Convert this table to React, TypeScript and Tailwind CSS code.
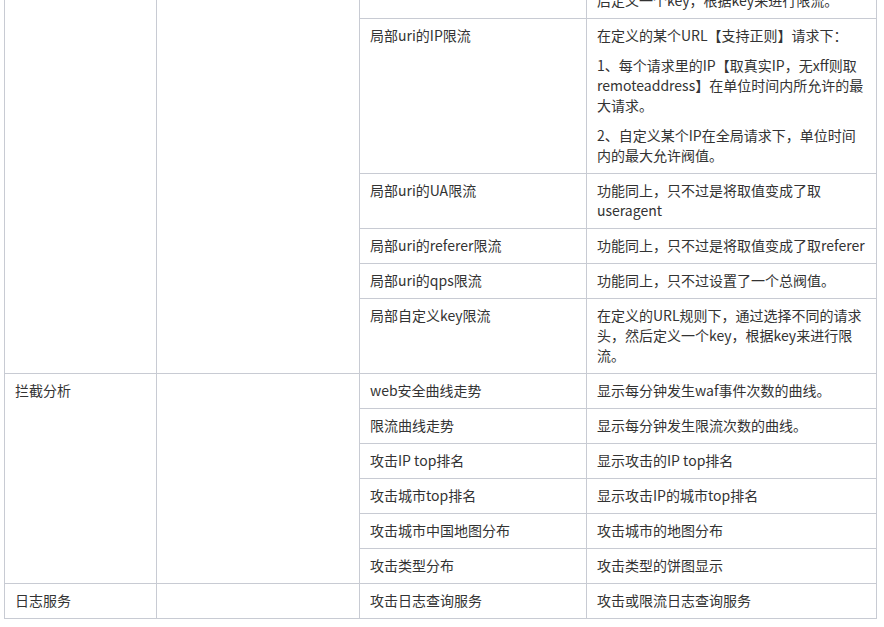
import React from "react";

const cell = "border border-[#c8cbd3] px-[10px] pt-[6px] pb-[8px] align-top";

type Row = { name: string; desc: React.ReactNode };

const limitRows: Row[] = [
  {
    name: "局部uri的IP限流",
    desc: (
      <div className="flex flex-col gap-[10px]">
        <p>在定义的某个URL【支持正则】请求下：</p>
        <p>1、每个请求里的IP【取真实IP，无xff则取remoteaddress】在单位时间内所允许的最大请求。</p>
        <p>2、自定义某个IP在全局请求下，单位时间内的最大允许阀值。</p>
      </div>
    ),
  },
  { name: "局部uri的UA限流", desc: "功能同上，只不过是将取值变成了取useragent" },
  { name: "局部uri的referer限流", desc: <span className="whitespace-nowrap">功能同上，只不过是将取值变成了取referer</span> },
  { name: "局部uri的qps限流", desc: "功能同上，只不过设置了一个总阀值。" },
  { name: "局部自定义key限流", desc: "在定义的URL规则下，通过选择不同的请求头，然后定义一个key，根据key来进行限流。" },
];

const analysisRows: Row[] = [
  { name: "web安全曲线走势", desc: "显示每分钟发生waf事件次数的曲线。" },
  { name: "限流曲线走势", desc: "显示每分钟发生限流次数的曲线。" },
  { name: "攻击IP top排名", desc: "显示攻击的IP top排名" },
  { name: "攻击城市top排名", desc: "显示攻击IP的城市top排名" },
  { name: "攻击城市中国地图分布", desc: "攻击城市的地图分布" },
  { name: "攻击类型分布", desc: "攻击类型的饼图显示" },
];

export default function App() {
  return (
    <div className="w-[884px] h-[627px] overflow-hidden bg-white font-['Noto_Sans_CJK_SC','Microsoft_YaHei',sans-serif] text-[14px] leading-[20px] text-[#333333]">
      <table className="ml-[4px] -mt-[37px] w-[873px] table-fixed border-collapse">
        <colgroup>
          <col className="w-[152px]" />
          <col className="w-[203px]" />
          <col className="w-[227px]" />
          <col className="w-[290px]" />
        </colgroup>
        <tbody>
          <tr>
            <td className={cell} rowSpan={6}></td>
            <td className={cell} rowSpan={6}></td>
            <td className={cell}>全局自定义key限流</td>
            <td className={cell}>
              通过选择不同的请求头，然
              <br />
              后定义一个key，根据key来进行限流。
            </td>
          </tr>
          {limitRows.map((r) => (
            <tr key={r.name}>
              <td className={cell}>{r.name}</td>
              <td className={cell}>{r.desc}</td>
            </tr>
          ))}
          {analysisRows.map((r, i) => (
            <tr key={r.name}>
              {i === 0 && (
                <>
                  <td className={cell} rowSpan={6}>
                    拦截分析
                  </td>
                  <td className={cell} rowSpan={6}></td>
                </>
              )}
              <td className={cell}>{r.name}</td>
              <td className={cell}>{r.desc}</td>
            </tr>
          ))}
          <tr>
            <td className={cell}>日志服务</td>
            <td className={cell}></td>
            <td className={cell}>攻击日志查询服务</td>
            <td className={cell}>攻击或限流日志查询服务</td>
          </tr>
        </tbody>
      </table>
    </div>
  );
}
